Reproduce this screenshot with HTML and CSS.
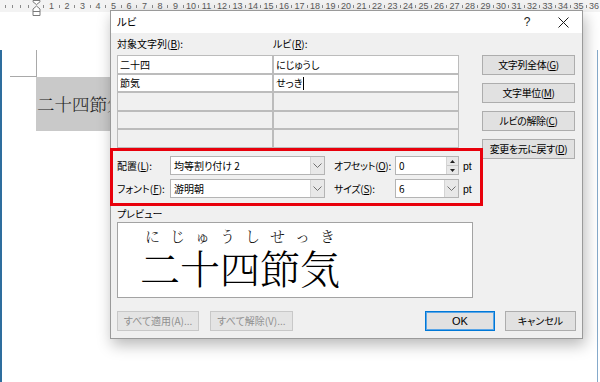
FILE: index.html
```html
<!DOCTYPE html>
<html lang="ja">
<head>
<meta charset="utf-8">
<title>ルビ</title>
<link rel="stylesheet" href="styles.css">
</head>
<body>
<div class="screen">
  <div class="ruler">
    <span class="t"></span><span class="t"></span><span class="t"></span><span class="t"></span>
    <span class="m"><svg width="9" height="16" viewBox="0 0 9 16"><path d="M1 0.5 H8 V1.8 L4.5 4.6 L1 1.8 Z" fill="#fff" stroke="#7a7a7a"/><path d="M4.5 6 L8 9 V15.5 H1 V9 Z" fill="#fff" stroke="#7a7a7a"/><path d="M1 11.5 H8" stroke="#7a7a7a"/></svg></span>
    <span class="t"></span><span class="n">1</span><span class="t"></span><span class="n">2</span><span class="t"></span><span class="n">3</span><span class="t"></span><span class="n">4</span><span class="t"></span><span class="n">5</span><span class="t"></span><span class="n">6</span><span class="t"></span><span class="n">7</span><span class="t"></span><span class="n">8</span><span class="t"></span><span class="n">9</span><span class="t"></span><span class="n">10</span><span class="t"></span><span class="n">11</span><span class="t"></span><span class="n">12</span><span class="t"></span><span class="n">13</span><span class="t"></span><span class="n">14</span><span class="t"></span><span class="n">15</span><span class="t"></span><span class="n">16</span><span class="t"></span><span class="n">17</span><span class="t"></span><span class="n">18</span><span class="t"></span><span class="n">19</span><span class="t"></span><span class="n">20</span><span class="t"></span><span class="n">21</span><span class="t"></span><span class="n">22</span><span class="t"></span><span class="n">23</span><span class="t"></span><span class="n">24</span><span class="t"></span><span class="n">25</span><span class="t"></span><span class="n">26</span><span class="t"></span><span class="n">27</span><span class="t"></span><span class="n">28</span><span class="t"></span><span class="n">29</span><span class="t"></span><span class="n">30</span><span class="t"></span><span class="n">31</span><span class="t"></span><span class="n">32</span><span class="t"></span><span class="n">33</span><span class="t"></span><span class="n">34</span><span class="t"></span><span class="n">35</span><span class="t"></span><span class="n">36</span>
  </div>
  <div class="doc">
    <div class="corner"></div>
    <div class="sel">二十四節気</div>
  </div>

  <div class="dialog">
    <div class="titlebar">
      <span class="title">ルビ</span>
      <span class="tb-help">?</span>
      <span class="tb-close"><svg width="11" height="11" viewBox="0 0 11 11"><path d="M0.5 0.5 L10.5 10.5 M10.5 0.5 L0.5 10.5" stroke="#1a1a1a" stroke-width="1"/></svg></span>
    </div>
    <div class="content">
      <div class="top">
        <div class="main">
          <div class="heads"><span class="h1">対象文字列(<u>B</u>):</span><span>ルビ(<u>R</u>):</span></div>
          <div class="grid">
            <div class="cell in">二十四</div><div class="cell in">にじゅうし</div>
            <div class="cell in">節気</div><div class="cell in">せっき<span class="caret"></span></div>
            <div class="cell"></div><div class="cell"></div>
            <div class="cell"></div><div class="cell"></div>
            <div class="cell"></div><div class="cell"></div>
          </div>
          <div class="opts">
            <div class="orow">
              <span class="lab1">配置(<u>L</u>):</span>
              <div class="combo wide"><span class="val">均等割り付け 2</span><span class="arr"><svg width="9" height="5" viewBox="0 0 9 5"><path d="M0.5 0.5 L4.5 4.5 L8.5 0.5" fill="none" stroke="#707070"/></svg></span></div>
              <span class="lab2">オフセット(<u>O</u>):</span>
              <div class="spin"><span class="val">0</span><span class="spinbtns"><span class="sb"><svg width="5" height="3" viewBox="0 0 5 3"><path d="M0 3 L2.5 0 L5 3 Z" fill="#202020"/></svg></span><span class="sb"><svg width="5" height="3" viewBox="0 0 5 3"><path d="M0 0 L2.5 3 L5 0 Z" fill="#202020"/></svg></span></span></div>
              <span class="unit">pt</span>
            </div>
            <div class="orow">
              <span class="lab1">フォント(<u>F</u>):</span>
              <div class="combo wide"><span class="val">游明朝</span><span class="arr"><svg width="9" height="5" viewBox="0 0 9 5"><path d="M0.5 0.5 L4.5 4.5 L8.5 0.5" fill="none" stroke="#707070"/></svg></span></div>
              <span class="lab2">サイズ(<u>S</u>):</span>
              <div class="combo narrow"><span class="val">6</span><span class="arr"><svg width="9" height="5" viewBox="0 0 9 5"><path d="M0.5 0.5 L4.5 4.5 L8.5 0.5" fill="none" stroke="#707070"/></svg></span></div>
              <span class="unit">pt</span>
            </div>
          </div>
          <div class="plabel">プレビュー</div>
          <div class="preview">
            <div class="rb">
              <div class="rt"><span>に</span><span>じ</span><span>ゅ</span><span>う</span><span>し</span><span>せ</span><span>っ</span><span>き</span></div>
              <div class="base">二十四節気</div>
            </div>
          </div>
        </div>
        <div class="side">
          <button class="btn">文字列全体(<u>G</u>)</button>
          <button class="btn">文字単位(<u>M</u>)</button>
          <button class="btn">ルビの解除(<u>C</u>)</button>
          <button class="btn">変更を元に戻す(<u>D</u>)</button>
        </div>
      </div>
      <div class="footer">
        <button class="btn dis b-all">すべて適用(A)...</button>
        <button class="btn dis b-clr">すべて解除(V)...</button>
        <button class="btn ok">OK</button>
        <button class="btn cancel">キャンセル</button>
      </div>
    </div>
  </div>
</div>
</body>
</html>
```

FILE: styles.css
```css
html, body {
  margin: 0;
  padding: 0;
  background: #fff;
}
body {
  font-family: "Noto Sans CJK JP", sans-serif;
}
.screen {
  width: 600px;
  height: 382px;
  position: relative;
  overflow: hidden;
  background: #fff;
}

/* ruler */
.ruler {
  height: 12px;
  background: #f3f3f3;
  display: flex;
  padding-left: 1.125px;
  font-family: "Liberation Sans", sans-serif;
  font-size: 9px;
  line-height: 12px;
  color: #5a5a5a;
}
.t, .n, .m {
  flex: none;
  width: 7.75px;
  height: 12px;
  display: flex;
  justify-content: center;
  align-items: center;
}
.t::before {
  content: "";
  width: 1px;
  height: 3px;
  background: #8a8a8a;
}
.m {
  align-items: flex-start;
}
.m svg {
  flex: none;
  display: block;
}

/* document */
.doc {
  width: 598px;
  height: 369px;
  box-sizing: border-box;
  border-left: 2px solid #2e6e9e;
  border-right: 1px solid #86aacb;
  border-bottom: 2px solid #2e6e9e;
}
.corner {
  margin-left: 8px;
  margin-top: 38px;
  width: 26px;
  height: 26px;
  border-right: 1px solid #a9a9a9;
  border-bottom: 1px solid #a9a9a9;
}
.sel {
  margin-left: 34px;
  width: 120px;
  height: 54px;
  padding-left: 1px;
  background: #c9c9c9;
  font-family: "Noto Serif CJK JP", "Noto Sans CJK JP", serif;
  font-weight: 300;
  font-size: 17.5px;
  line-height: 54px;
  color: #222;
  white-space: nowrap;
}

/* dialog */
.dialog {
  position: absolute;
  left: 110px;
  top: 10px;
  width: 473px;
  height: 329px;
  box-sizing: border-box;
  border: 1px solid #9a9a9a;
  background: #f0f0f0;
  box-shadow: 2px 6px 14px rgba(0, 0, 0, 0.28);
  font-size: 10px;
  font-feature-settings: "palt";
  color: #000;
  display: flex;
  flex-direction: column;
}
.titlebar {
  height: 22px;
  flex: none;
  background: #fff;
  display: flex;
  align-items: center;
  padding-left: 6px;
  padding-right: 4px;
}
.title {
  font-size: 10.5px;
  line-height: 14px;
}
.tb-help {
  margin-left: auto;
  width: 30px;
  text-align: center;
  font-family: "Liberation Sans", sans-serif;
  font-size: 12px;
  color: #222;
}
.tb-close {
  width: 30px;
  margin-left: 6px;
  display: flex;
  justify-content: center;
}
.tb-close svg { display: block; }

.content {
  padding: 4px 6px 0 6px;
}
.top {
  display: flex;
}
.main {
  width: 356px;
  flex: none;
}
.heads {
  display: flex;
  height: 14px;
  line-height: 14px;
  margin-bottom: 4px;
}
.h1 {
  width: 156px;
}
u {
  text-decoration-thickness: 1px;
  text-underline-offset: 1px;
}

.grid {
  display: grid;
  grid-template-columns: 156px 186px;
  grid-template-rows: 19px 18px 19px 18px 19px;
  width: 342px;
}
.cell {
  box-sizing: border-box;
  border: 1px solid #bcbcbc;
  background: #f0f0f0;
  padding-left: 2px;
  display: flex;
  align-items: center;
  line-height: 14px;
  white-space: nowrap;
}
.cell.in {
  background: #fff;
}
.caret {
  display: inline-block;
  width: 1px;
  height: 13px;
  background: #000;
  margin-left: 1px;
}

/* highlighted options */
.opts {
  position: relative;
  z-index: 1;
  margin-left: -7px;
  width: 373px;
  box-sizing: border-box;
  border: 3px solid #e8000b;
  padding: 5px 0 5px 4px;
  display: flex;
  flex-direction: column;
  gap: 4px;
}
.orow {
  display: flex;
  align-items: center;
  height: 19px;
  white-space: nowrap;
}
.lab1 {
  width: 53px;
  flex: none;
}
.lab2 {
  width: 61px;
  flex: none;
  margin-left: 9px;
  letter-spacing: -0.3px;
}
.combo, .spin {
  display: flex;
  height: 19px;
  box-sizing: border-box;
  border: 1px solid #b4b4b4;
  background: #fff;
  flex: none;
}
.combo.wide { width: 155px; }
.combo.narrow, .spin { width: 64px; }
.val {
  flex: 1;
  padding-left: 3px;
  line-height: 17px;
}
.arr {
  width: 13px;
  background: #e8e8e8;
  border-left: 1px solid #d4d4d4;
  display: flex;
  justify-content: center;
  align-items: center;
}
.arr svg { display: block; }
.spinbtns {
  width: 11px;
  display: flex;
  flex-direction: column;
  border-left: 1px solid #d4d4d4;
}
.sb {
  flex: 1;
  background: #e8e8e8;
  display: flex;
  justify-content: center;
  align-items: center;
}
.sb + .sb {
  border-top: 1px solid #c8c8c8;
}
.sb svg { display: block; }
.unit {
  margin-left: 4px;
  font-family: "Liberation Sans", sans-serif;
  font-size: 10.5px;
}

/* preview */
.plabel {
  margin-top: 1px;
  height: 14px;
  line-height: 14px;
}
.preview {
  margin-top: 1px;
  width: 356px;
  height: 76px;
  box-sizing: border-box;
  border: 1px solid #a3a3a3;
  background: #fff;
  padding: 4px 0 0 22px;
  font-family: "Noto Serif CJK JP", "Noto Sans CJK JP", serif;
  font-feature-settings: normal;
}
.rb {
  width: 200px;
}
.rt {
  display: flex;
  justify-content: space-around;
  font-size: 15px;
  line-height: 18px;
  font-weight: 300;
  color: #111;
}
.base {
  font-size: 40px;
  line-height: 44px;
  font-weight: 300;
  color: #000;
  white-space: nowrap;
}

/* buttons */
.side {
  margin-left: 9px;
  width: 93px;
  flex: none;
  display: flex;
  flex-direction: column;
  gap: 8px;
  padding-top: 18px;
}
.side .btn {
  letter-spacing: -0.4px;
}
.btn {
  height: 20px;
  box-sizing: border-box;
  border: 1px solid #adadad;
  background: #e1e1e1;
  padding: 0;
  margin: 0;
  font: inherit;
  font-feature-settings: "palt";
  line-height: 16px;
  color: #000;
  white-space: nowrap;
}
.footer {
  margin-top: 13px;
  display: flex;
  height: 20px;
}
.btn.dis {
  color: #8f8f8f;
  border-color: #c8c8c8;
  background: #e4e4e4;
}
.b-all { width: 82px; }
.b-clr { width: 83px; margin-left: 11px; }
.ok {
  width: 70px;
  margin-left: auto;
  border-color: #0078d7;
  box-shadow: inset 0 0 0 1px #5aa5e6;
  font-family: "Liberation Sans", sans-serif;
  font-size: 11px;
}
.cancel {
  width: 71px;
  margin-left: 10px;
}
```
